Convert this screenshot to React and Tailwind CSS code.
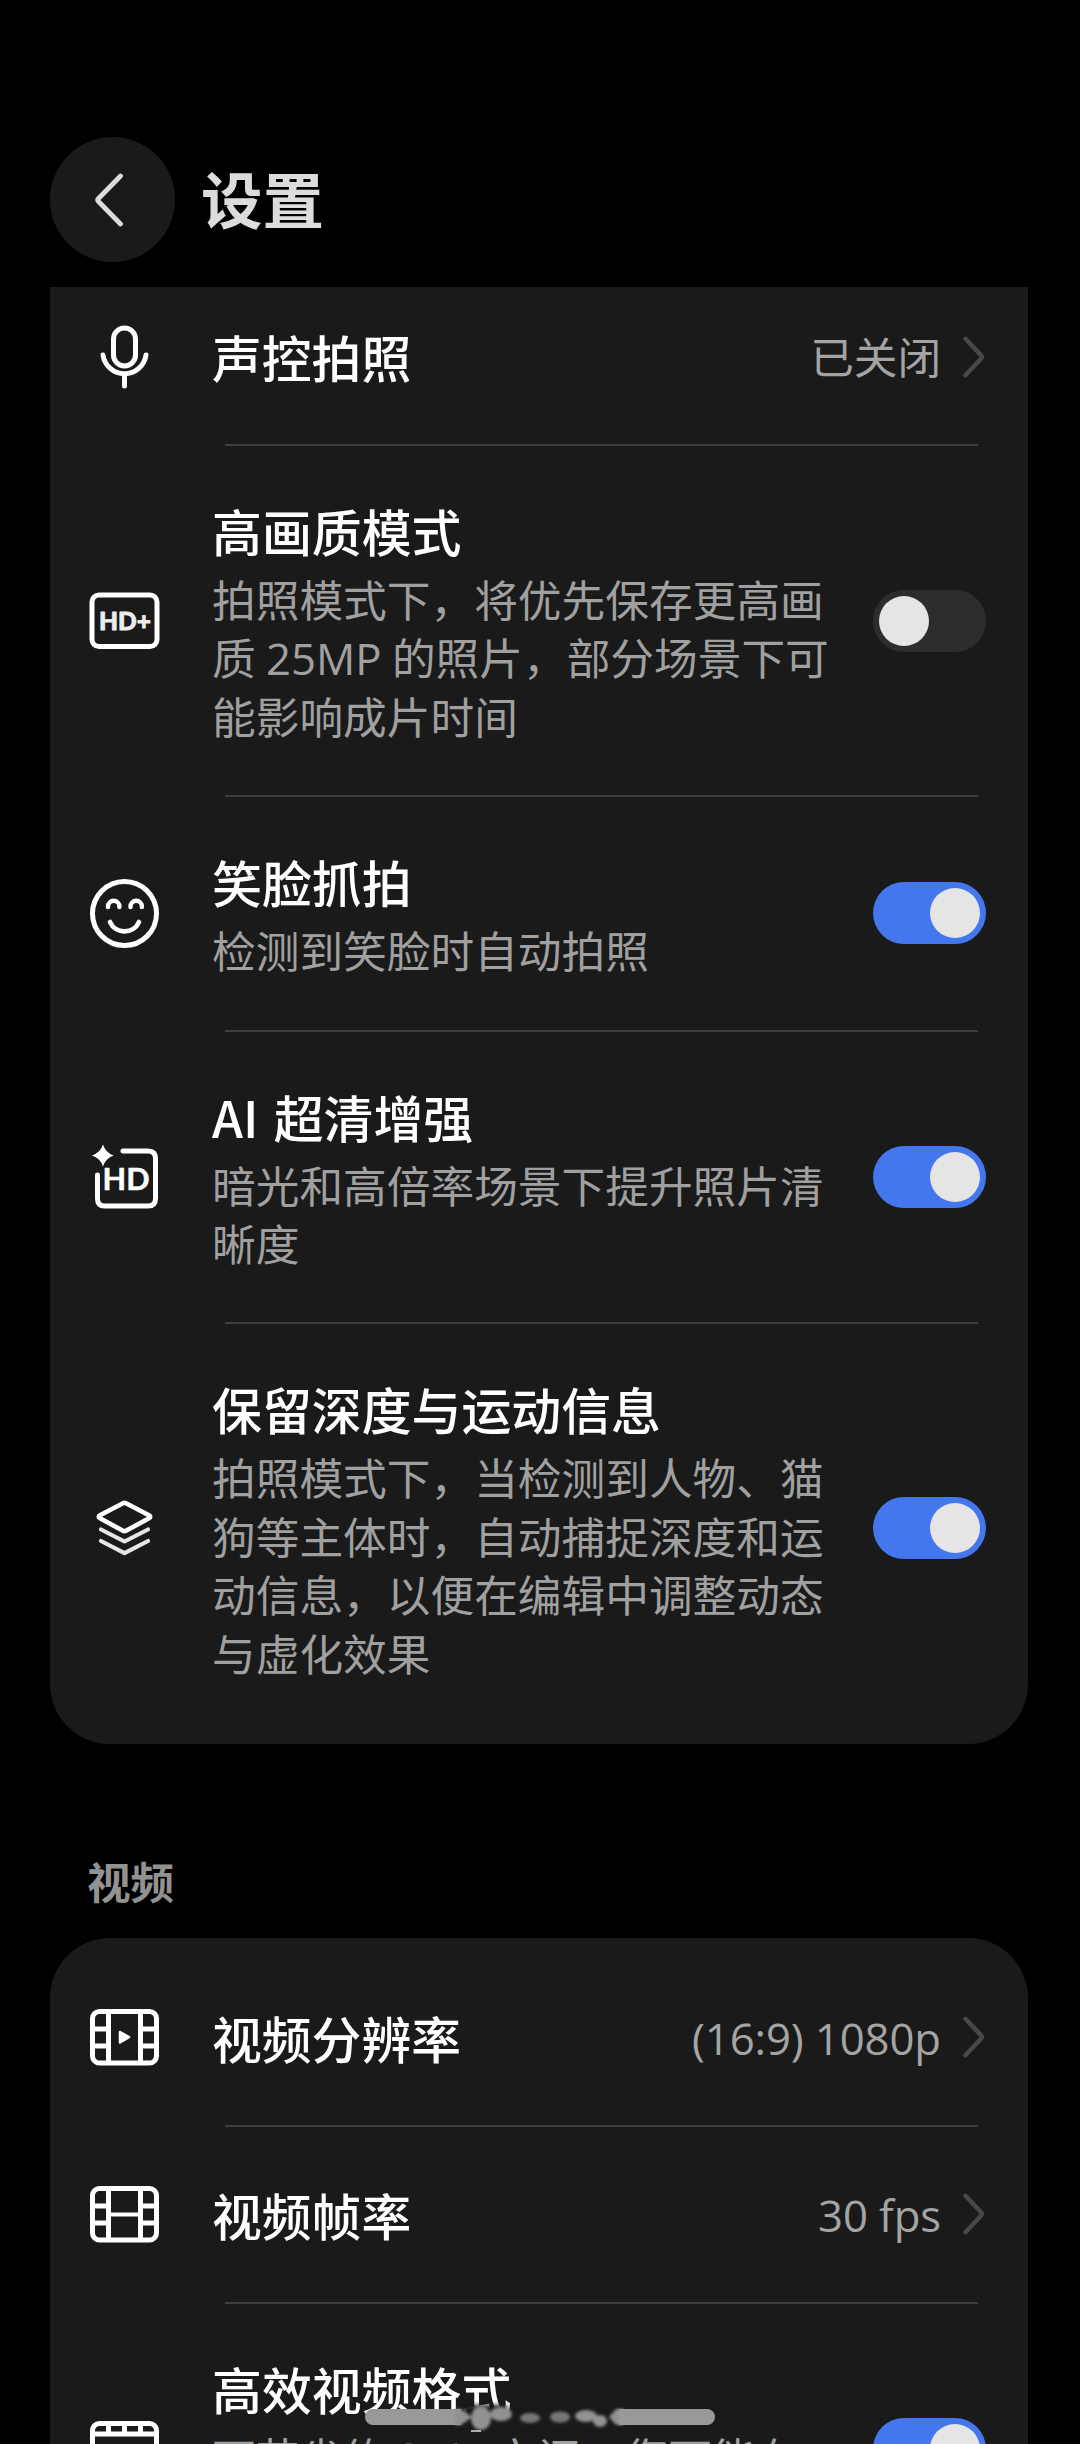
import React, { useState } from "react";

const iconProps = {
  viewBox: "0 0 80 80",
  className: "size-20",
  fill: "none",
  stroke: "#fff",
  strokeWidth: 5,
  strokeLinecap: "round",
  strokeLinejoin: "round",
};

const MicIcon = () => (
  <svg {...iconProps}>
    <rect x="29.5" y="11" width="22" height="38" rx="11" />
    <path d="M19 38 A21.7 21.7 0 0 0 62 38 M40.5 60 V69" />
  </svg>
);

const HdPlusIcon = () => (
  <svg {...iconProps}>
    <rect x="8" y="14" width="65" height="51.5" rx="7" />
    <text
      x="41"
      y="48.5"
      fill="#ececec"
      stroke="#ececec"
      strokeWidth="0.8"
      textAnchor="middle"
      textLength="52"
      lengthAdjust="spacingAndGlyphs"
      className="font-['Lato',sans-serif] text-[25px] font-black"
    >
      HD+
    </text>
  </svg>
);

const SmileIcon = () => (
  <svg {...iconProps}>
    <circle cx="40.5" cy="40.5" r="32" />
    <path
      d="M24 34 V33.5 a5.7 5.7 0 0 1 11.4 0 V34 M46.5 34 V33.5 a5.7 5.7 0 0 1 11.4 0 V34"
      strokeWidth="4.4"
    />
    <path d="M26 49 C31.5 61.5 49.5 61.5 55 49" strokeWidth="4.6" />
  </svg>
);

const AiHdIcon = () => (
  <svg {...iconProps}>
    <path d="M39 14 H64 Q71.5 14 71.5 21.5 V61.5 Q71.5 69 64 69 H20.5 Q13.5 69 13.5 61.5 V38" />
    <path
      d="M19 7.5 Q21.5 15.5 29.5 18.5 Q21.5 21.5 19 29.5 Q16.5 21.5 8 18.5 Q16.5 15.5 19 7.5Z"
      fill="#fff"
      stroke="none"
    />
    <text
      x="42"
      y="52.5"
      fill="#fff"
      stroke="#fff"
      strokeWidth="0.5"
      textAnchor="middle"
      textLength="47"
      lengthAdjust="spacingAndGlyphs"
      className="font-['Lato',sans-serif] text-[31px] font-bold"
    >
      HD
    </text>
  </svg>
);

const LayersIcon = () => (
  <svg {...iconProps} strokeWidth="4.6">
    <path d="M39 15.2 Q40.5 14.4 42 15.2 L65 27.3 Q67.5 28.8 65 30.3 L42 42.8 Q40.5 43.6 39 42.8 L16 30.3 Q13.5 28.8 16 27.3 Z" />
    <path
      d="M17 41.5 L40.5 53.5 L64 41.5 M17 53 L40.5 65.2 L64 53"
      stroke="#e6e6e6"
      strokeWidth="4.2"
    />
  </svg>
);

const ResolutionIcon = () => (
  <svg {...iconProps} strokeLinecap="butt">
    <rect x="8.5" y="14.5" width="64" height="51.5" rx="7" />
    <path d="M24.5 14 V66 M56.5 14 V66 M8 32 H24 M8 49 H24 M57 32 H73 M57 49 H73" />
    <path d="M36 35 L45 40.2 L36 45.5 Z" fill="#fff" strokeWidth="2.5" />
  </svg>
);

const FrameRateIcon = () => (
  <svg {...iconProps} strokeLinecap="butt">
    <rect x="8.5" y="14.5" width="64" height="51.5" rx="7" />
    <path d="M24.5 14 V66 M56.5 14 V66 M8 32 H24 M8 49 H24 M57 32 H73 M57 49 H73" />
    <path d="M24 40.5 H57" strokeWidth="4" />
  </svg>
);

const FormatIcon = () => (
  <svg {...iconProps} strokeLinecap="butt">
    <rect x="8.5" y="14.5" width="64" height="51.5" rx="7" />
    <path d="M8 25 H72 M24.5 14 V25 M40.5 14 V25 M56.5 14 V25" />
  </svg>
);

const Switch = ({ defaultOn }) => {
  const [on, setOn] = useState(defaultOn);

  return (
    <button
      role="switch"
      aria-checked={on}
      onClick={() => setOn(!on)}
      className={`flex h-[62px] w-[113px] shrink-0 items-center rounded-full px-1.5 ${
        on ? "justify-end bg-[#4477ee]" : "justify-start bg-[#2d2d2d]"
      }`}
    >
      <span className="size-[50px] rounded-full bg-[#e5e5e5]" />
    </button>
  );
};

const Divider = () => <div className="mr-[50px] ml-[175px] h-0.5 bg-[#3e3e3e]" />;

const LinkRow = ({ icon, title, value }) => (
  <div className="flex h-[175px] items-center pr-[43px] pl-[34px]">
    {icon}
    <h3 className="ml-12 flex-1 font-['Noto_Sans_CJK_SC',sans-serif] text-[49.8px] leading-none font-medium text-white">
      {title}
    </h3>
    <span className="pt-[3px] text-[43.7px] leading-none tracking-[-0.1px] text-[#a4a4a4]">
      {value}
    </span>
    <svg
      viewBox="0 0 24 44"
      className="ml-5 h-11 w-6"
      fill="none"
      stroke="#484848"
      strokeWidth="4.5"
      strokeLinecap="round"
      strokeLinejoin="round"
    >
      <path d="M4.5 3.8 L20 20.3 Q21.5 22 20 23.7 L4.5 40.2" />
    </svg>
  </div>
);

const SwitchRow = ({ icon, title, lines, on }) => (
  <div className="flex items-center py-[49px] pr-[42px] pl-[34px]">
    {icon}
    <div className="ml-12 flex-1">
      <h3 className="h-[76px] font-['Noto_Sans_CJK_SC',sans-serif] text-[49.9px] leading-[70px] font-medium whitespace-nowrap text-white [word-spacing:4px]">
        {title}
      </h3>
      {lines.map((line) => (
        <p
          key={line}
          className="h-[58.4px] text-[43.7px] leading-[58.4px] whitespace-nowrap text-[#a0a0a0] [word-spacing:-1px]"
        >
          {line}
        </p>
      ))}
    </div>
    <Switch defaultOn={on} />
  </div>
);

const App = () => {
  return (
    <div className="relative h-[2444px] w-[1080px] overflow-hidden bg-black px-[50px] font-['Open_Sans','Noto_Sans_CJK_SC',sans-serif]">
      <header className="flex h-[287px] items-end pb-[25px]">
        <button className="flex size-[125px] items-center justify-center rounded-full bg-[#1a1a1a]">
          <svg
            viewBox="0 0 30 56"
            className="mr-[7px] h-14 w-[30px]"
            fill="none"
            stroke="#dcdcdc"
            strokeWidth="4.8"
            strokeLinecap="round"
            strokeLinejoin="round"
          >
            <path d="M26.5 4 L4.5 26.5 Q3 28 4.5 29.5 L26.5 52" />
          </svg>
        </button>
        <h1 className="ml-[26px] h-[125px] text-[61.5px] leading-[126px] font-bold text-[#dcdcdc]">
          设置
        </h1>
      </header>

      {/* The list is scrolled, so the header cuts off the top of the first row */}
      <div className="overflow-hidden">
        <section className="-mt-[18px] w-[978px] rounded-b-[60px] bg-[#1a1a1a] pb-3">
          <LinkRow icon={<MicIcon />} title="声控拍照" value="已关闭" />
          <Divider />
          <SwitchRow
            icon={<HdPlusIcon />}
            title="高画质模式"
            lines={["拍照模式下，将优先保存更高画", "质 25MP 的照片，部分场景下可", "能影响成片时间"]}
            on={false}
          />
          <Divider />
          <SwitchRow icon={<SmileIcon />} title="笑脸抓拍" lines={["检测到笑脸时自动拍照"]} on />
          <Divider />
          <SwitchRow
            icon={<AiHdIcon />}
            title="AI 超清增强"
            lines={["暗光和高倍率场景下提升照片清", "晰度"]}
            on
          />
          <Divider />
          <SwitchRow
            icon={<LayersIcon />}
            title="保留深度与运动信息"
            lines={[
              "拍照模式下，当检测到人物、猫",
              "狗等主体时，自动捕捉深度和运",
              "动信息，以便在编辑中调整动态",
              "与虚化效果",
            ]}
            on
          />
        </section>
      </div>

      <h2 className="mt-[108px] h-[86px] pl-[37px] text-[43.6px] leading-[60px] font-bold text-[#929292]">
        视频
      </h2>

      <section className="w-[978px] rounded-t-[60px] bg-[#1a1a1a] pt-3">
        <LinkRow icon={<ResolutionIcon />} title="视频分辨率" value="(16:9) 1080p" />
        <Divider />
        <LinkRow icon={<FrameRateIcon />} title="视频帧率" value="30 fps" />
        <Divider />
        <SwitchRow
          icon={<FormatIcon />}
          title="高效视频格式"
          lines={["可节省约 35% 空间，您可能在", ""]}
          on
        />
      </section>

      {/* Home indicator, smudged in the middle */}
      <div className="absolute top-[2399px] left-[365px] flex h-9 w-[350px] items-center">
        <div className="h-4 w-[96px] rounded-l-full bg-[#999]" />
        <svg viewBox="0 0 158 36" className="h-9 w-[158px] overflow-visible">
          <g className="blur-[2px]">
            <path d="M2 6 H46 V14 H156 V30 H22 L2 27 Z" fill="#1a1a1a" />
          </g>
          <g fill="#929292" className="blur-[1.5px]">
            <path d="M-6 10 H0 L11 18 L0 26 H-6 Z" />
            <ellipse cx="20" cy="19" rx="10" ry="12" />
            <ellipse cx="40" cy="15" rx="11" ry="7" />
            <ellipse cx="69" cy="19" rx="10" ry="5" fill="#777" />
            <ellipse cx="99" cy="18" rx="10" ry="5.5" fill="#777" />
            <ellipse cx="125" cy="17" rx="11" ry="6" />
            <ellipse cx="139" cy="22" rx="7" ry="6" />
            <path d="M163 10 H155 L148 18 L155 26 H163 Z" />
          </g>
          <path d="M10 32 H20" stroke="#ddd" strokeWidth="1.5" />
        </svg>
        <div className="h-4 w-[96px] rounded-r-full bg-[#999]" />
      </div>
    </div>
  );
};

export default App;
